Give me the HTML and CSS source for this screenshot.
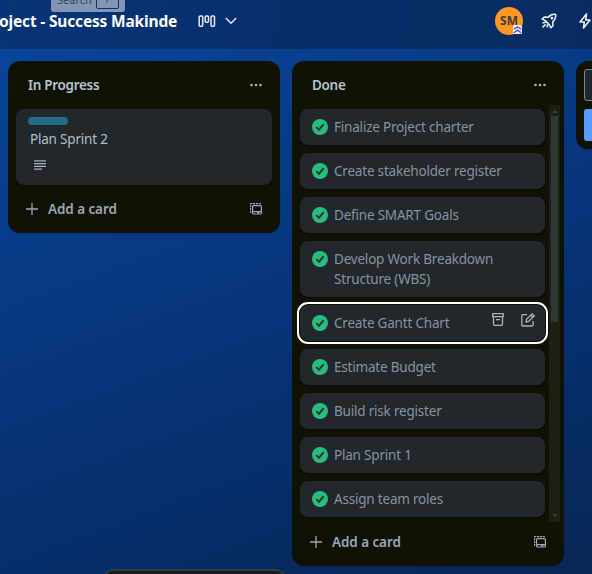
FILE: index.html
```html
<!DOCTYPE html>
<html lang="en">
<head>
<meta charset="utf-8">
<title>Project - Success Makinde</title>
<link rel="stylesheet" href="styles.css">
</head>
<body>
<svg class="defs" width="0" height="0">
  <symbol id="check" viewBox="0 0 16 16"><circle cx="8" cy="8" r="8" fill="#2abb7f"/><path d="M4.300 8.100 7 10.800l4.600-5.600" fill="none" stroke="#1d3430" stroke-width="1.900"/></symbol>
  <symbol id="dots" viewBox="0 0 14 4"><circle cx="1.500" cy="2" r="1.300"/><circle cx="6" cy="2" r="1.300"/><circle cx="10.500" cy="2" r="1.300"/></symbol>
  <symbol id="plus" viewBox="0 0 12 12"><path d="M6 0v12M0 6h12" fill="none" stroke="currentColor" stroke-width="1.300"/></symbol>
  <symbol id="template" viewBox="0 0 12 12"><g fill="none" stroke="currentColor" stroke-width="1.200"><rect x="2.600" y="2.600" width="8.800" height="8.400" rx="1"/><path d="M2.800 8.600h8.400" /><path d="M.6 10V.7H11" stroke-dasharray="2.200 .7"/></g><path d="M7 8.500h2.500v2H7z" fill="currentColor"/></symbol>
</svg>
<header class="topbar">
  <div class="tooltip">Search <kbd>/</kbd></div>
  <h1>oject - Success Makinde</h1>
  <svg class="views" width="18" height="13" viewBox="0 0 18 13" fill="none" stroke="#e4eaf3" stroke-width="1.500"><rect x="1.200" y="1" width="3.500" height="10.300" rx="1"/><rect x="7.200" y="1" width="3.300" height="6.300" rx="1"/><rect x="13" y="1" width="3.500" height="10.300" rx="1"/></svg>
  <svg class="chevron" width="12" height="8" viewBox="0 0 12 8" fill="none" stroke="#e4eaf3" stroke-width="1.500"><path d="m.8 1 5.200 5.200L11.200 1"/></svg>
  <div class="avatar">SM<svg class="badge" width="9" height="9" viewBox="0 0 9 9"><rect width="9" height="9" rx="1.500" fill="#eef0fb"/><path d="m1 4.300 3.500-2.500L8 4.300M1 7.700l3.500-2.500L8 7.700" fill="none" stroke="#5146b8" stroke-width="1.400"/></svg></div>
  <svg class="rocket" width="16" height="16" viewBox="0 0 16 16" fill="none" stroke="#edf1f7" stroke-width="1.500" stroke-linejoin="round"><path d="M14.600 1.400c-3.200-.5-5.500.6-7.400 2.900L3.300 4 1.200 6.100l3 1.500 4.200 4.200 1.500 3L12 12.700l-.3-3.900c2.300-1.900 3.400-4.200 2.900-7.400zM4.600 9.300 1.500 10M4.600 11.400l-3 3M6.700 11.400 6 14.500"/><circle cx="10.900" cy="5.100" r=".7"/></svg>
  <svg class="bolt" width="12" height="16" viewBox="0 0 12 16" fill="none" stroke="#edf1f7" stroke-width="1.600" stroke-linejoin="round"><path d="M7.500 1 1 9h4.300L4.500 15 11 7H6.700z"/></svg>
</header>
<main class="board">
  <section class="list">
    <div class="list-head"><h2>In Progress</h2><svg class="dots" width="14" height="4"><use href="#dots"/></svg></div>
    <article class="card labelled">
      <span class="label"></span>
      <p>Plan Sprint 2</p>
      <svg class="desc" width="12" height="10" viewBox="0 0 12 10" stroke="#a5b0bf" stroke-width="1.300"><path d="M0 .8h12M0 3.600h12M0 6.400h12M0 9.200h8"/></svg>
    </article>
    <div class="list-foot"><svg width="12" height="12"><use href="#plus"/></svg><span>Add a card</span><svg class="template" width="12" height="12"><use href="#template"/></svg></div>
  </section>
  <section class="list">
    <div class="list-head"><h2>Done</h2><svg class="dots" width="14" height="4"><use href="#dots"/></svg></div>
    <div class="scroller">
      <div class="cards">
        <article class="card done"><svg class="check"><use href="#check"/></svg><p>Finalize Project charter</p></article>
        <article class="card done"><svg class="check"><use href="#check"/></svg><p>Create stakeholder register</p></article>
        <article class="card done"><svg class="check"><use href="#check"/></svg><p>Define SMART Goals</p></article>
        <article class="card done"><svg class="check"><use href="#check"/></svg><p>Develop Work Breakdown<br>Structure (WBS)</p></article>
        <article class="card done focused"><svg class="check"><use href="#check"/></svg><p>Create Gantt Chart</p>
          <div class="actions">
            <svg width="12" height="13" viewBox="0 0 12 13" fill="none" stroke="currentColor" stroke-width="1.300"><rect x=".65" y=".65" width="10.700" height="3" rx=".4"/><path d="M1.500 3.700v7.600a1 1 0 0 0 1 1h7a1 1 0 0 0 1-1V3.700M4 6.700h4"/></svg>
            <svg width="14" height="14" viewBox="0 0 14 14" fill="none" stroke="currentColor" stroke-width="1.300"><path d="M6 1.700H2a1.200 1.200 0 0 0-1.200 1.200v8.900A1.200 1.200 0 0 0 2 13h8.900a1.200 1.200 0 0 0 1.200-1.200V8"/><path d="m5 9 .5-2.700L11.200.8l2 2L7.700 8.500zM9.700 2.300l2 2"/></svg>
          </div>
        </article>
        <article class="card done"><svg class="check"><use href="#check"/></svg><p>Estimate Budget</p></article>
        <article class="card done"><svg class="check"><use href="#check"/></svg><p>Build risk register</p></article>
        <article class="card done"><svg class="check"><use href="#check"/></svg><p>Plan Sprint 1</p></article>
        <article class="card done"><svg class="check"><use href="#check"/></svg><p>Assign team roles</p></article>
      </div>
      <div class="track"><i class="up"></i><div class="thumb"></div><i class="down"></i></div>
    </div>
    <div class="list-foot"><svg width="12" height="12"><use href="#plus"/></svg><span>Add a card</span><svg class="template" width="12" height="12"><use href="#template"/></svg></div>
  </section>
  <section class="list composer"><div class="field"></div><div class="button"></div></section>
</main>
<div class="dock"></div>
</body>
</html>
```

FILE: styles.css
```css
* { box-sizing: border-box; }
body {
  margin: 0;
  width: 592px;
  height: 574px;
  overflow: hidden;
  position: relative;
  font: 14px/20px "Noto Sans", "Open Sans", sans-serif;
  color: #a9b4c3;
  background: linear-gradient(160deg, #09479f 0%, #083c88 30%, #062f6d 70%, #082754 100%);
}
h1, h2, p { margin: 0; }
.defs { position: absolute; }
.topbar {
  position: relative;
  display: flex;
  align-items: center;
  height: 49px;
  padding-bottom: 7px;
  background: linear-gradient(100deg, #073478, #082d66 60%, #082c62);
}
.tooltip {
  position: absolute;
  left: 51px;
  top: -11px;
  width: 74px;
  height: 23px;
  padding: 1px 6px;
  display: flex;
  justify-content: space-between;
  border-radius: 3px;
  background: #8295b3;
  color: #34486b;
  font-size: 11px;
  line-height: 20px;
}
.tooltip kbd {
  width: 23px;
  height: 19px;
  border: 1px solid #172f59;
  border-radius: 2px;
  font: 10px/17px "Noto Sans", sans-serif;
  text-align: center;
}
h1 {
  width: 198px;
  margin-left: -1px;
  margin-right: 1px;
  color: #fff;
  font-size: 15.500px;
  font-weight: 700;
  white-space: nowrap;
  letter-spacing: -.17px;
}
.chevron { margin-left: 9px; }
.avatar {
  position: relative;
  width: 28px;
  height: 28px;
  margin-left: 258px;
  border-radius: 50%;
  background: #fb9723;
  color: #453b35;
  font-size: 12px;
  font-weight: 700;
  line-height: 28px;
  text-align: center;
}
.badge { position: absolute; right: 1px; bottom: 1px; }
.rocket { margin-left: 18px; }
.bolt { margin-left: 22px; flex: none; }
.board { display: flex; align-items: flex-start; gap: 12px; padding: 12px 0 8px 8px; overflow: hidden; }
.list {
  flex: none;
  width: 272px;
  border-radius: 12px;
  background: #101204;
  box-shadow: 0 1px 1px #091e4240;
}
.list-head {
  display: flex;
  justify-content: space-between;
  align-items: center;
  height: 48px;
  padding: 0 16px 0 20px;
}
h2 { font-size: 13.500px; font-weight: 600; line-height: 20px; color: #b6c2cf; letter-spacing: -.3px; }
.dots { fill: #a5b0bf; }
.card { border-radius: 8px; background: #22272b; box-shadow: 0 1px 1px #05060480; }
.labelled { margin: 0 8px; height: 76px; padding: 8px 12px; }
.label { display: block; width: 40px; height: 8px; border-radius: 4px; background: #216e87; }
.labelled p { padding: 4px 2px; color: #b2bdcb; font-size: 13.500px; letter-spacing: -.2px; }
.desc { display: block; margin: 7px 0 0 6px; }
.list-foot {
  display: flex;
  align-items: center;
  height: 48px;
  padding: 0 18px;
  font-size: 13.500px;
  font-weight: 600;
  color: #9aa7b7;
  letter-spacing: -.08px;
}
.list-foot span { margin-left: 10px; }
.template { margin-left: auto; }
.scroller { display: flex; justify-content: space-between; margin: -4px 4px 0 8px; height: 417px; }
.cards { display: flex; flex-direction: column; gap: 8px; width: 245px; padding-top: 4px; }
.done { display: flex; padding: 8px 12px; color: #8593a2; }
.done p { margin-left: 6px; font-size: 13.500px; letter-spacing: -.2px; }
.check { flex: none; width: 16px; height: 16px; margin-top: 2px; }
.focused { outline: 2px solid #fff; outline-offset: 1px; }
.actions { display: flex; gap: 17px; margin: 0 -2px 0 auto; color: #a9b4c3; }
.track {
  display: flex;
  flex-direction: column;
  align-items: center;
  width: 11px;
  background: #1d1f14;
}
.up { margin: 5px 0 3px; border: 3px solid transparent; border-top: 0; border-bottom-color: #363c35; }
.thumb { width: 7px; height: 206px; background: #303a35; }
.down { margin: auto 0 5px; border: 3px solid transparent; border-bottom: 0; border-top-color: #363c35; }
.scroller + .list-foot { height: 44px; padding-bottom: 4px; }
.composer { height: 88px; padding: 8px; }
.field { height: 32px; border: 1px solid #738496; border-radius: 3px; background: #22272b; }
.button { height: 32px; margin-top: 8px; border-radius: 3px; background: #579dff; }
.dock {
  position: absolute;
  left: 103px;
  top: 569px;
  width: 183px;
  height: 20px;
  border: 2px solid #343c43;
  border-radius: 12px;
  background: #181a1c;
}
```
